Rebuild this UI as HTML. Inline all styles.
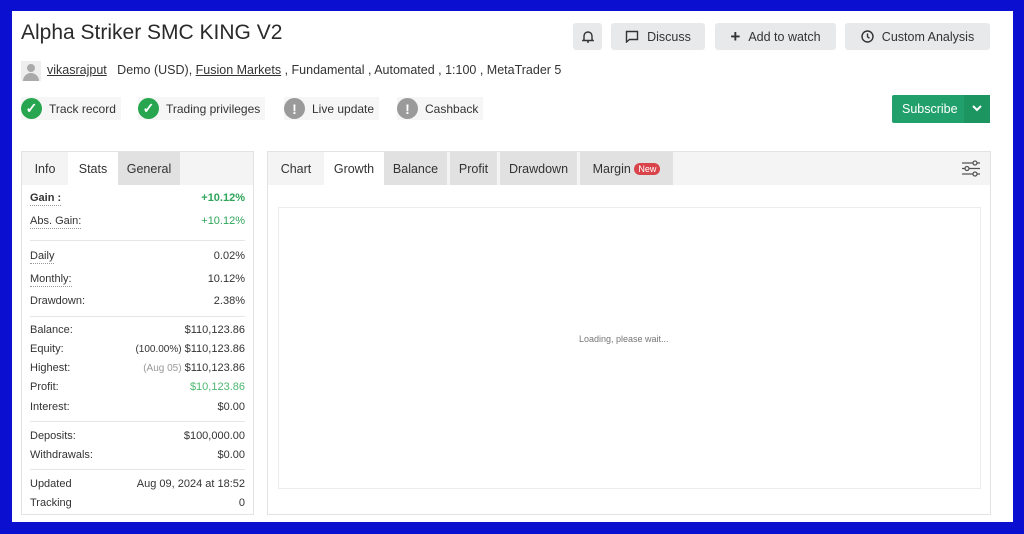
<!DOCTYPE html>
<html><head><meta charset="utf-8"><style>
*{box-sizing:border-box;margin:0;padding:0}
body{width:1024px;height:534px;background:#0a0fd0;font-family:"Liberation Sans",sans-serif;color:#333;position:relative;overflow:hidden}
.page{position:absolute;left:12px;top:11px;width:1001px;height:511px;background:#fff}
.a{position:absolute}
h1{position:absolute;left:21px;top:21px;font-size:21px;font-weight:normal;color:#2a2a2a}
.btn{position:absolute;top:23px;height:27px;background:#e8e9eb;border-radius:3px;font-size:12.5px;color:#333;display:flex;align-items:center;justify-content:center;gap:8px}
.badge{position:absolute;top:97px;height:23px;background:#f6f6f6;font-size:12px;color:#333;display:flex;align-items:center;gap:7px;padding-left:0}
.ic{width:21px;height:21px;border-radius:50%;display:flex;align-items:center;justify-content:center;color:#fff;font-weight:bold;font-size:14px}
.panel{position:absolute;top:151px;height:364px;border:1px solid #e3e3e3;background:#fff}
.tabs{height:33px;background:#f4f4f4;display:flex;font-size:12.5px}
.tab{height:33px;display:flex;align-items:center;justify-content:center;color:#333}
.row{position:absolute;left:8px;right:8px;font-size:11px;display:flex;justify-content:space-between;color:#333}
.row span:first-child{border-bottom:1px dotted #999;line-height:13px}
.sep{position:absolute;left:8px;right:8px;height:1px;background:#e6e6e6}
.g{color:#2ea55a}
</style></head><body>
<div class="a" style="left:12px;top:11px;width:1001px;height:511px;background:#fff"></div>
<h1>Alpha Striker SMC KING V2</h1>
<div class="a" style="left:21px;top:61px;width:20px;height:20px;background:#eee;overflow:hidden">
<div class="a" style="left:6px;top:3px;width:8px;height:8px;border-radius:50%;background:#aaa"></div>
<div class="a" style="left:2px;top:12px;width:16px;height:10px;border-radius:8px 8px 0 0;background:#aaa"></div></div>
<div class="a" style="left:47px;top:63px;font-size:12.5px;color:#333"><u>vikasrajput</u>&nbsp;&nbsp; Demo (USD), <u>Fusion Markets</u> , Fundamental , Automated , 1:100 , MetaTrader 5</div>

<div class="badge" style="left:21px;width:100px"><div class="ic" style="background:#27a64f">✓</div>Track record</div>
<div class="badge" style="left:138px;width:127px"><div class="ic" style="background:#27a64f">✓</div>Trading privileges</div>
<div class="badge" style="left:284px;width:95px"><div class="ic" style="background:#9a9a9a">!</div>Live update</div>
<div class="badge" style="left:397px;width:86px"><div class="ic" style="background:#9a9a9a">!</div>Cashback</div>

<div class="btn" style="left:573px;width:29px"><svg width="12" height="13" viewBox="0 0 12 13" fill="none" stroke="#333" stroke-width="1.4"><path d="M2 9.5V6a4 4 0 0 1 8 0v3.5L11 10.5H1Z"/><path d="M5 12h2"/></svg></div>
<div class="btn" style="left:611px;width:94px"><svg width="14" height="13" viewBox="0 0 14 13" fill="none" stroke="#333" stroke-width="1.4"><path d="M1.5 1.5h11v8h-8l-3 2.5Z"/></svg>Discuss</div>
<div class="btn" style="left:715px;width:121px"><span style="font-size:17px;font-weight:bold">+</span>Add to watch</div>
<div class="btn" style="left:845px;width:145px"><svg width="13" height="13" viewBox="0 0 13 13" fill="none" stroke="#333" stroke-width="1.4"><circle cx="6.5" cy="6.5" r="5.5"/><path d="M6.5 3.5v3.3l2 1.5"/></svg>Custom Analysis</div>

<div class="a" style="left:892px;top:95px;width:98px;height:28px;background:#22a06b;border-radius:2px;color:#fff;font-size:12.5px">
<div class="a" style="left:10px;top:7px">Subscribe</div>
<div class="a" style="left:72px;top:0;width:26px;height:28px;background:#1d9560;text-align:center;line-height:26px"><svg width="10" height="7" viewBox="0 0 10 7" fill="none" stroke="#fff" stroke-width="2"><path d="M1 1l4 4 4-4"/></svg></div></div>

<div class="panel" style="left:21px;width:233px">
<div class="tabs"><div class="tab" style="width:46px">Info</div><div class="tab" style="width:50px;background:#fff">Stats</div><div class="tab" style="width:62px;background:#e1e1e1">General</div></div>
<div class="row" style="top:40px"><span style="font-weight:bold">Gain :</span><span class="g" style="font-weight:bold">+10.12%</span></div>
<div class="row" style="top:63px"><span>Abs. Gain:</span><span class="g">+10.12%</span></div>
<div class="sep" style="top:88px"></div>
<div class="row" style="top:98px"><span>Daily</span><span>0.02%</span></div>
<div class="row" style="top:121px"><span>Monthly:</span><span>10.12%</span></div>
<div class="row" style="top:143px"><span style="border:0">Drawdown:</span><span>2.38%</span></div>
<div class="sep" style="top:164px"></div>
<div class="row" style="top:172px"><span style="border:0">Balance:</span><span>$110,123.86</span></div>
<div class="row" style="top:191px"><span style="border:0">Equity:</span><span><small style="font-size:10px">(100.00%)</small> $110,123.86</span></div>
<div class="row" style="top:210px"><span style="border:0">Highest:</span><span><small style="font-size:10px;color:#999">(Aug 05)</small> $110,123.86</span></div>
<div class="row" style="top:229px"><span style="border:0">Profit:</span><span class="g" style="color:#4cb86e">$10,123.86</span></div>
<div class="row" style="top:249px"><span style="border:0">Interest:</span><span>$0.00</span></div>
<div class="sep" style="top:269px"></div>
<div class="row" style="top:278px"><span style="border:0">Deposits:</span><span>$100,000.00</span></div>
<div class="row" style="top:297px"><span style="border:0">Withdrawals:</span><span>$0.00</span></div>
<div class="sep" style="top:317px"></div>
<div class="row" style="top:326px"><span style="border:0">Updated</span><span>Aug 09, 2024 at 18:52</span></div>
<div class="row" style="top:345px"><span style="border:0">Tracking</span><span>0</span></div>
</div>

<div class="panel" style="left:267px;width:724px">
<div class="tabs"><div class="tab" style="width:56px">Chart</div><div class="tab" style="width:60px;background:#fff">Growth</div><div class="tab" style="width:63px;background:#e1e1e1">Balance</div><div class="tab" style="width:47px;background:#e1e1e1;margin-left:3px">Profit</div><div class="tab" style="width:77px;background:#e1e1e1;margin-left:3px">Drawdown</div><div class="tab" style="width:93px;background:#e1e1e1;margin-left:3px">Margin&nbsp;<span style="background:#d9434a;color:#fff;font-size:9px;border-radius:7px;padding:1px 4px">New</span></div></div>
<svg class="a" style="left:693px;top:7px" width="20" height="19" viewBox="0 0 20 19" fill="none" stroke="#555" stroke-width="1.3"><path d="M1 4h11M16 4h3M1 9.5h3M8 9.5h11M1 15h11M16 15h3"/><circle cx="14" cy="4" r="2"/><circle cx="6" cy="9.5" r="2"/><circle cx="14" cy="15" r="2"/></svg>
<div class="a" style="left:10px;top:55px;width:703px;height:282px;border:1px solid #ececec"></div>
<div class="a" style="left:311px;top:182px;font-size:9px;color:#777">Loading, please wait...</div>
</div>
</body></html>
